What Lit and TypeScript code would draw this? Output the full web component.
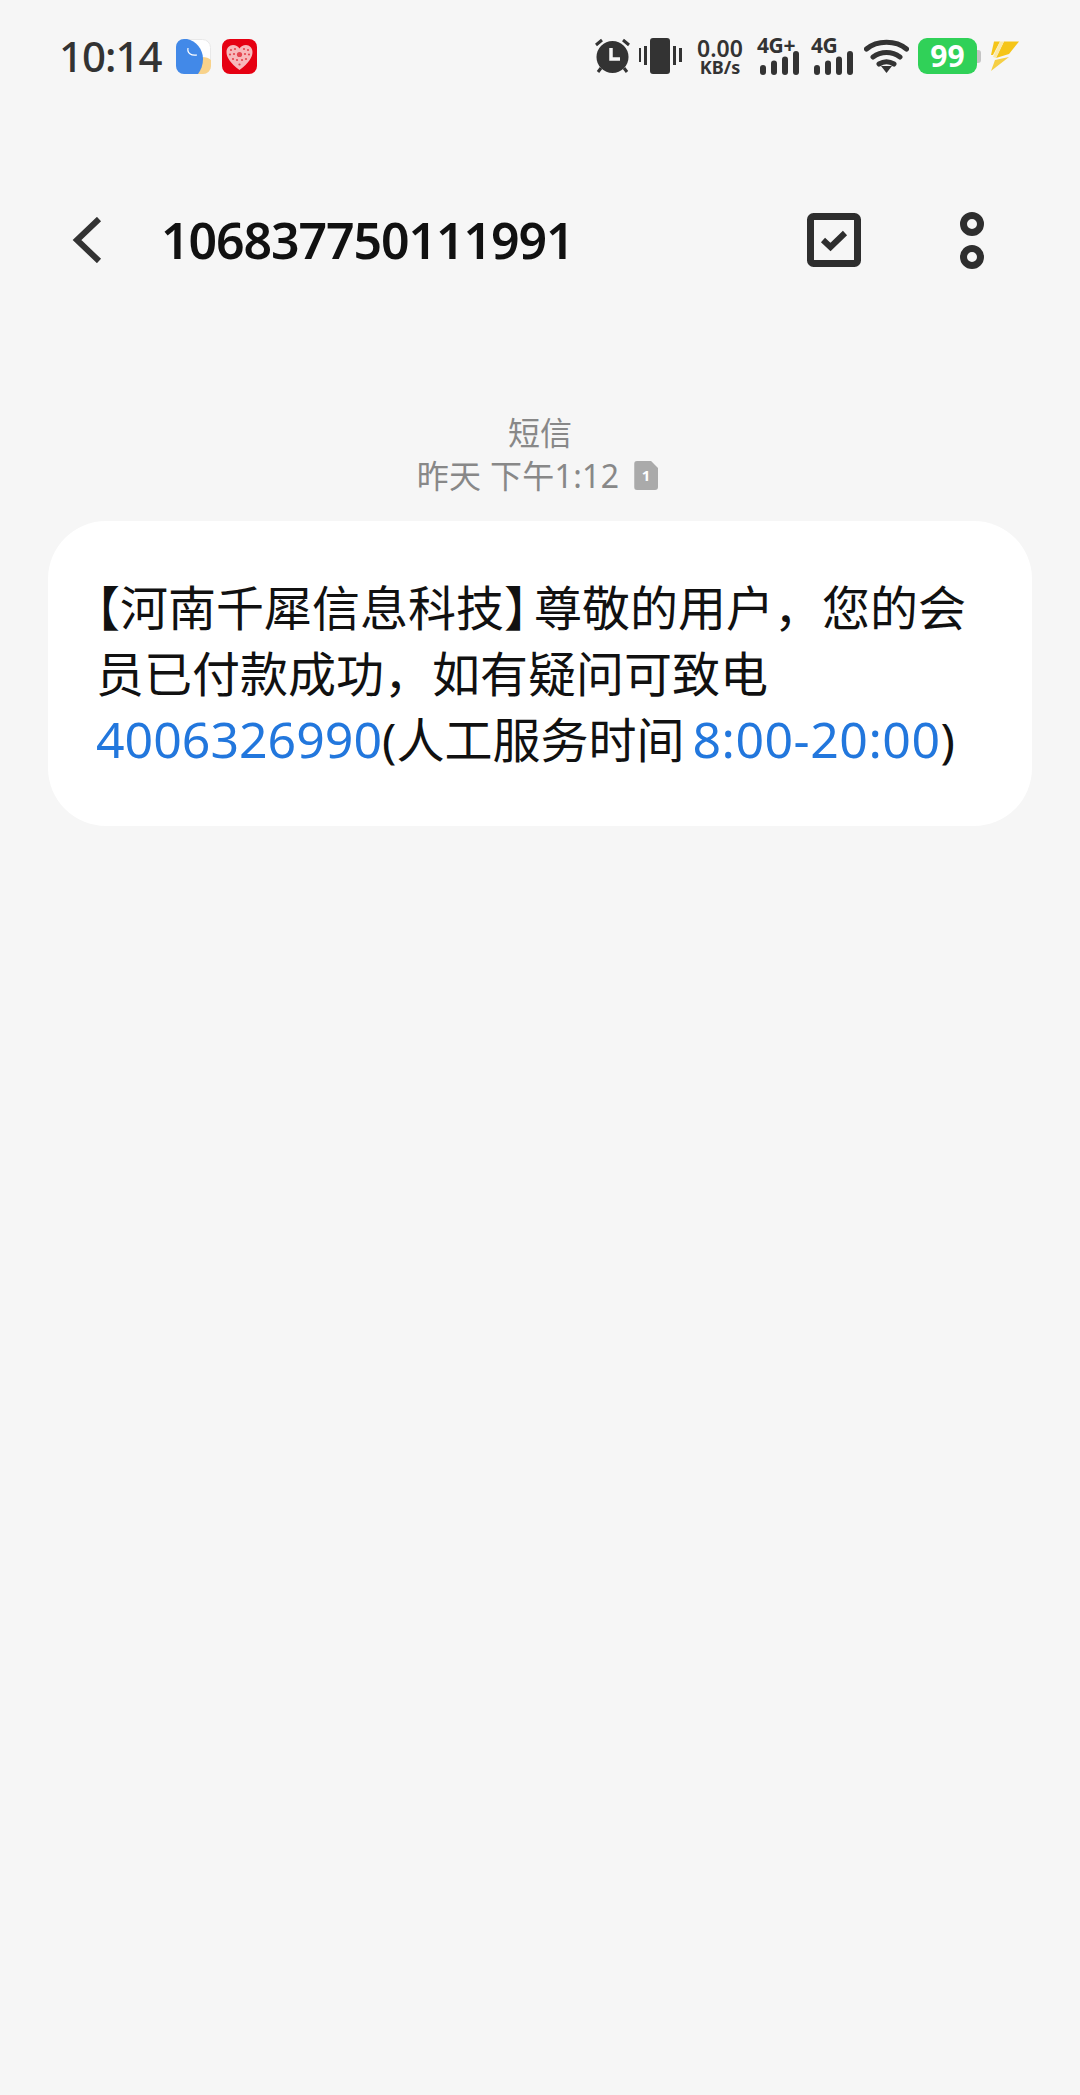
import { LitElement, html, css } from 'lit';
import { customElement } from 'lit/decorators.js';

const signal = html`<svg class="bars" viewBox="0 0 40 24" width="40" height="24">
  <rect x="0" y="14" width="6" height="10" rx="3" />
  <rect x="11" y="9.5" width="6" height="14.5" rx="3" />
  <rect x="22" y="5.5" width="6" height="18.5" rx="3" />
  <rect x="33" y="0" width="6" height="24" rx="3" />
</svg>`;

@customElement('app-root')
export class AppRoot extends LitElement {
  static styles = css`
    :host {
      display: block;
      min-height: 2095px;
      background: #f6f6f6;
      font-family: 'Noto Sans', 'Noto Sans CJK SC', sans-serif;
    }

    .status {
      display: flex;
      align-items: center;
      height: 112px;
      padding: 0 60px;
      box-sizing: border-box;
      color: #333;
    }

    .time {
      font-size: 42px;
      line-height: 42px;
      font-weight: 500;
      letter-spacing: -1px;
      margin-left: -1px;
      width: 117px;
    }

    .app {
      display: block;
      width: 35px;
      height: 35px;
      margin-right: 11px;
    }

    .tray {
      display: flex;
      align-items: center;
      margin-left: auto;
    }

    .tray svg {
      display: block;
      fill: #333;
    }

    .vibrate { margin-left: 8px; }
    .speed {
      margin-left: 14px;
      width: 48px;
      text-align: center;
      font-weight: 600;
    }
    .speed b {
      display: block;
      font-size: 23px;
      line-height: 22px;
      font-weight: 600;
    }
    .speed span {
      display: block;
      font-size: 18px;
      line-height: 17px;
      font-weight: 700;
    }
    .net {
      margin-left: 13px;
      width: 44px;
      height: 38px;
      position: relative;
    }
    .net + .net { margin-left: 10px; }
    .net span {
      position: absolute;
      top: -2px;
      left: 0;
      font-size: 21px;
      line-height: 20px;
      font-weight: 700;
      letter-spacing: -0.4px;
    }
    .net .bars {
      position: absolute;
      left: 3px;
      bottom: 0;
    }
    .wifi { margin-left: 9px; }
    .battery {
      display: flex;
      align-items: center;
      margin-left: 9px;
    }
    .battery-body {
      width: 59px;
      height: 36px;
      border-radius: 9px;
      background: #30d158;
      color: #fff;
      font-size: 30px;
      line-height: 36px;
      font-weight: 700;
      text-align: center;
    }
    .battery-cap {
      width: 4px;
      height: 13px;
      border-radius: 0 3px 3px 0;
      background: #c4c4c4;
    }
    .bolt { margin-left: 9px; }

    .header {
      display: flex;
      align-items: center;
      height: 160px;
      margin-top: 48px;
      padding: 0 96px 0 72px;
    }

    .header svg {
      display: block;
      flex: none;
    }

    .title {
      margin-left: 59px;
      font-size: 50px;
      font-weight: 600;
      letter-spacing: -1.1px;
      color: #111;
    }

    .check { margin-left: auto; }
    .dots { margin-left: 99px; }

    .meta {
      margin: 91px 0 24px;
      text-align: center;
      font-size: 32px;
      line-height: 43px;
      color: #888;
    }

    .meta-line {
      display: flex;
      justify-content: center;
      align-items: center;
      gap: 15px;
      padding-right: 5px;
      letter-spacing: 0.3px;
    }

    .sim {
      width: 24px;
      height: 29px;
      background: #aaa;
      border-radius: 3px;
      clip-path: polygon(0 0, 70% 0, 100% 25%, 100% 100%, 0 100%);
      color: #fff;
      font-size: 15px;
      line-height: 29px;
      font-weight: 700;
    }

    .bubble {
      margin: 0 48px;
      padding: 54px 48px 53px;
      background: #fff;
      border-radius: 58px;
      font-size: 48px;
      line-height: 66px;
      color: #111;
    }

    .bracket {
      font-feature-settings: 'halt';
    }

    .bracket.close {
      margin-right: 6px;
    }

    .link {
      color: #2277dd;
      font-size: 50px;
      line-height: 0;
    }

    .link.hours {
      margin-left: 8px;
      letter-spacing: 0.5px;
    }
  `;

  render() {
    return html`
      <div class="status">
        <span class="time">10:14</span>
        <svg class="app" viewBox="0 0 35 35">
          <rect x=".5" y=".5" width="34" height="34" rx="8" fill="#fff" stroke="#e8e8e8" />
          <path d="M26 18c4 0 7 1 9 3v6a8 8 0 0 1-8 8h-6c3-5 5-11 5-17z" fill="#f8d28a" />
          <path d="M8 0h3c9 2 16 10 16 20 0 6-2 11-5 15H8a8 8 0 0 1-8-8V8a8 8 0 0 1 8-8z" fill="#4289e8" />
          <path d="M12 9c-1 5 3 8 9 7" fill="none" stroke="#fff" stroke-width="1.2" />
        </svg>
        <svg class="app" viewBox="0 0 35 35">
          <rect width="35" height="35" rx="8" fill="#e60012" />
          <path d="M17.5 31C8 24 4.500 18 4.500 13c0-4 3-7 6.500-7 3 0 5 1.500 6.500 3.500C19 7.500 21 6 24 6c3.500 0 6.500 3 6.500 7 0 5-3.500 11-13 18z" fill="#f7b9bb" />
          <g fill="#e4454f">
            <circle cx="9" cy="11" r="1.100" /><circle cx="13" cy="10" r="1.100" />
            <circle cx="22" cy="10" r="1.100" /><circle cx="26" cy="11" r="1.100" />
            <circle cx="8" cy="15.500" r="1.100" /><circle cx="12" cy="15" r="1.100" />
            <circle cx="17.500" cy="15.500" r="2.600" /><circle cx="23" cy="15" r="1.100" />
            <circle cx="27" cy="15.500" r="1.100" /><circle cx="11" cy="20" r="1.100" />
            <circle cx="15" cy="21" r="1.100" /><circle cx="20" cy="21" r="1.100" />
            <circle cx="24" cy="20" r="1.100" /><circle cx="17.500" cy="25.500" r="1.100" />
          </g>
        </svg>
        <div class="tray">
          <svg viewBox="0 0 37 38" width="37" height="38">
            <path d="M2 8l6-5M35 8l-6-5M7 31l-3 4M30 31l3 4" stroke="#333" stroke-width="3" fill="none" />
            <circle cx="18.500" cy="20" r="16" />
            <path d="M17 11v11h9" stroke="#f6f6f6" stroke-width="3.500" fill="none" />
          </svg>
          <svg class="vibrate" viewBox="0 0 43 36" width="43" height="36">
            <rect x="11" y="0" width="20" height="36" rx="3" />
            <rect x="0" y="10" width="2" height="14" />
            <rect x="5" y="8" width="3" height="19" />
            <rect x="34" y="8" width="3" height="19" />
            <rect x="40" y="10" width="3" height="14" />
          </svg>
          <div class="speed"><b>0.00</b><span>KB/s</span></div>
          <div class="net"><span>4G+</span>${signal}</div>
          <div class="net"><span>4G</span>${signal}</div>
          <svg class="wifi" viewBox="0 0 45 36" width="45" height="36">
            <path d="M2.500 11C13 2 32 2 42.500 11M9 19c8-6 19-6 27 0M15 26c5-3 10-3 15 0" fill="none" stroke="#333" stroke-width="5" stroke-linecap="round" />
            <path d="M17 28h11l-5.500 7z" />
          </svg>
          <div class="battery">
            <div class="battery-body">99</div>
            <div class="battery-cap"></div>
          </div>
          <svg class="bolt" viewBox="0 0 30 30" width="30" height="30">
            <path d="M4 .5h6L3 14H1z" fill="#f5c518" />
            <path d="M14 .5h15L19 13 6 17z" fill="#f5c518" />
            <path d="M5 19l14-3L1 30z" fill="#f5cf45" />
            <path d="M10 .5h4L6 17l-3-1z" fill="#fbe9a8" />
          </svg>
        </div>
      </div>

      <div class="header">
        <svg viewBox="0 0 30 46" width="30" height="46">
          <path d="M27 2L5 23l22 21" fill="none" stroke="#333" stroke-width="6" />
        </svg>
        <span class="title">106837750111991</span>
        <svg class="check" viewBox="0 0 54 54" width="54" height="54">
          <rect x="3.500" y="3.500" width="47" height="47" rx="3" fill="none" stroke="#2e2e2e" stroke-width="7" />
          <path d="M16 27l7.500 7L38 20" fill="none" stroke="#2e2e2e" stroke-width="6" />
        </svg>
        <svg class="dots" viewBox="0 0 24 57" width="24" height="57">
          <circle cx="12" cy="12" r="8.500" fill="none" stroke="#2e2e2e" stroke-width="7" />
          <circle cx="12" cy="45" r="8.500" fill="none" stroke="#2e2e2e" stroke-width="7" />
        </svg>
      </div>

      <div class="meta">
        <div>短信</div>
        <div class="meta-line"><span>昨天 下午1:12</span><span class="sim">1</span></div>
      </div>

      <div class="bubble"><span class="bracket">【</span>河南千犀信息科技<span class="bracket close">】</span>尊敬的用户，您的会员已付款成功，如有疑问可致电<span class="link">4006326990</span>(人工服务时间<span class="link hours">8:00-20:00</span>)</div>
    `;
  }
}
